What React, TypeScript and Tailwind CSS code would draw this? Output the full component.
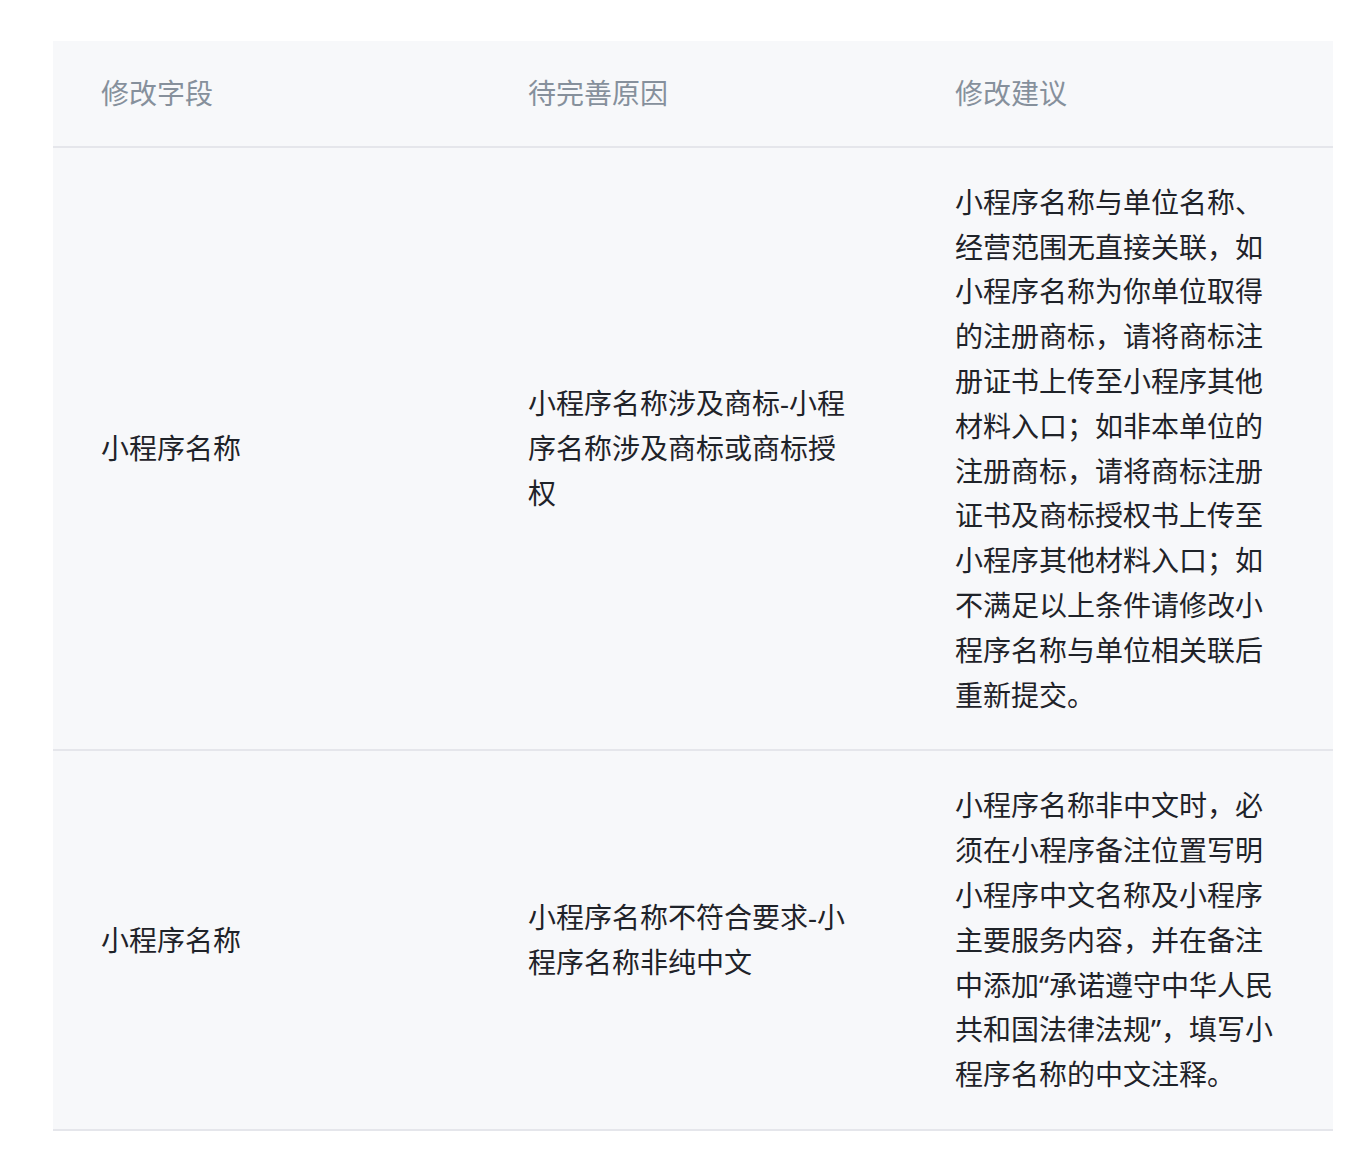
import React from 'react';

const rows = [
  {
    field: '小程序名称',
    reason: '小程序名称涉及商标-小程序名称涉及商标或商标授权',
    advice:
      '小程序名称与单位名称、经营范围无直接关联，如小程序名称为你单位取得的注册商标，请将商标注册证书上传至小程序其他材料入口；如非本单位的注册商标，请将商标注册证书及商标授权书上传至小程序其他材料入口；如不满足以上条件请修改小程序名称与单位相关联后重新提交。',
  },
  {
    field: '小程序名称',
    reason: '小程序名称不符合要求-小程序名称非纯中文',
    advice:
      '小程序名称非中文时，必须在小程序备注位置写明小程序中文名称及小程序主要服务内容，并在备注中添加“承诺遵守中华人民共和国法律法规”，填写小程序名称的中文注释。',
  },
];

const Cell = ({ children, head }: { children: React.ReactNode; head?: boolean }) => (
  <div className={'flex items-center px-12 ' + (head ? 'py-[30px] text-[#86909c]' : 'py-8 text-[#1f2329]')}>
    <div className="w-full break-all">{children}</div>
  </div>
);

export default function App() {
  return (
    <div className="min-h-[1160px] bg-white pt-[41px] pl-[53px]">
      <div
        className="w-[1280px] bg-[#f7f8fa] text-[28px] leading-[44.8px]"
        style={{ fontFamily: '"Noto Sans", "Noto Sans CJK SC", sans-serif' }}
      >
        <div className="grid grid-cols-[427px_427px_426px] border-b-2 border-[#e5e6eb]">
          <Cell head>修改字段</Cell>
          <Cell head>待完善原因</Cell>
          <Cell head>修改建议</Cell>
        </div>
        {rows.map((r, i) => (
          <div key={i} className="grid grid-cols-[427px_427px_426px] border-b-2 border-[#e5e6eb]">
            <Cell>{r.field}</Cell>
            <Cell>{r.reason}</Cell>
            <Cell>{r.advice}</Cell>
          </div>
        ))}
      </div>
    </div>
  );
}
